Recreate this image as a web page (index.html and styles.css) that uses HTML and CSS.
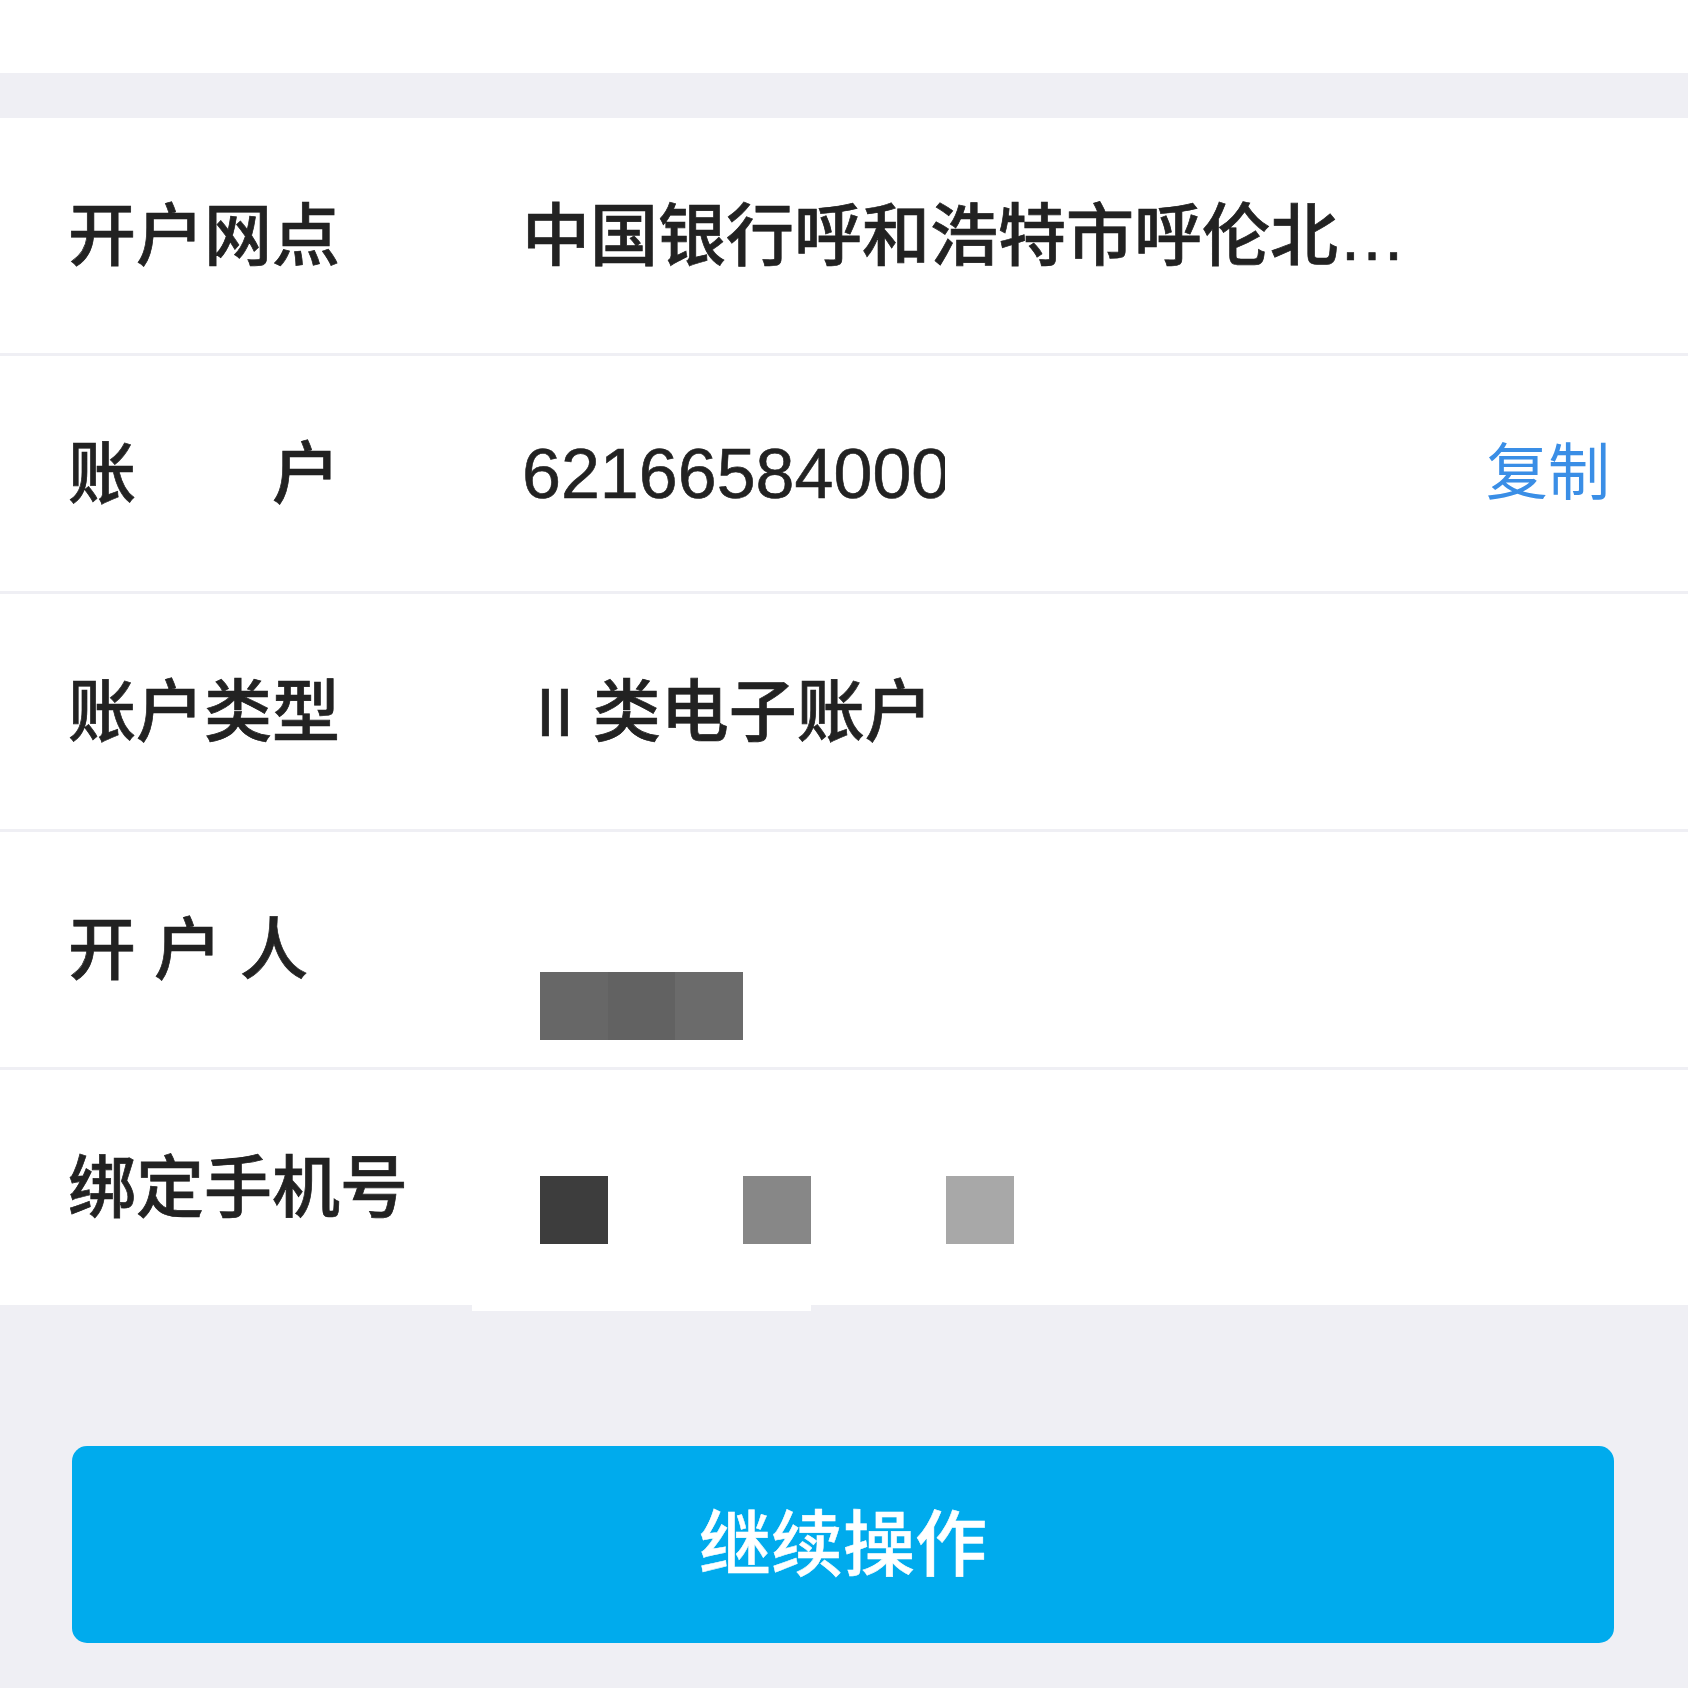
FILE: index.html
```html
<!DOCTYPE html>
<html lang="zh-CN">
<head>
<meta charset="utf-8">
<title>账户信息</title>
<link rel="stylesheet" href="styles.css">
</head>
<body>
<div class="page">
  <div class="topbar"></div>
  <div class="card">
    <div class="row">
      <div class="label">开户网点</div>
      <div class="value">中国银行呼和浩特市呼伦北…</div>
    </div>
    <div class="row">
      <div class="label"><span class="split"><span>账</span><span>户</span></span></div>
      <div class="value clip">62166584000</div>
      <div class="action">复制</div>
    </div>
    <div class="row">
      <div class="label">账户类型</div>
      <div class="value"><span class="roman">II</span> 类电子账户</div>
    </div>
    <div class="row">
      <div class="label spaced">开户人</div>
      <div class="mosaic name">
        <span class="tile t1"></span><span class="tile t2"></span><span class="tile t3"></span>
      </div>
    </div>
    <div class="row">
      <div class="label">绑定手机号</div>
      <div class="mosaic phone">
        <span class="tile p1"></span><span class="tile blank"></span><span class="tile blank"></span>
        <span class="tile p2"></span><span class="tile blank"></span><span class="tile blank"></span>
        <span class="tile p3"></span>
      </div>
    </div>
  </div>
  <div class="tail"></div>
  <div class="footer">
    <button class="primary" type="button">继续操作</button>
  </div>
</div>
</body>
</html>
```
FILE: styles.css
```css
* {
  box-sizing: border-box;
  margin: 0;
  padding: 0;
}

html, body {
  background: #efeff4;
}

body {
  width: 1688px;
  height: 1688px;
  overflow: hidden;
  font-family: "Liberation Sans", "Noto Sans CJK SC", sans-serif;
  color: #222222;
}

.topbar {
  height: 73px;
  background: #ffffff;
}

.card {
  margin-top: 45px;
  background: #ffffff;
}

.row {
  display: flex;
  align-items: center;
  box-sizing: content-box;
  height: 235px;
  padding-left: 68px;
  border-top: 3px solid #efeff4;
}

.row:first-child {
  border-top: 0;
}

.label {
  flex: none;
  width: 454px;
  font-size: 68px;
  line-height: 1;
  font-weight: 500;
  white-space: nowrap;
  -webkit-text-stroke: 0.7px #222222;
}

.split {
  display: flex;
  justify-content: space-between;
  width: 4em;
}

.spaced {
  letter-spacing: 18px;
}

.value {
  font-size: 68px;
  line-height: 1;
  font-weight: 500;
  white-space: nowrap;
  -webkit-text-stroke: 0.7px #222222;
}

.clip {
  width: 423px;
  overflow: hidden;
  font-size: 70px;
  font-weight: 400;
  -webkit-text-stroke: 0.6px #222222;
}

.roman {
  margin-left: 14px;
  font-weight: 400;
}

.action {
  margin-left: auto;
  margin-right: 78px;
  color: #3a8ee6;
  font-size: 62px;
  line-height: 1;
  font-weight: 400;
}

.mosaic {
  align-self: flex-start;
  display: flex;
  margin-left: 18px;
}

.name {
  margin-top: 140px;
}

.phone {
  margin-top: 106px;
}

.tile {
  display: block;
  width: 67.7px;
  height: 67.7px;
}

.t1 { background: #676767; }
.t2 { background: #626262; }
.t3 { background: #6b6b6b; }
.p1 { background: #3d3d3d; }
.p2 { background: #878787; }
.p3 { background: #a8a8a8; }
.blank { background: #ffffff; }

.tail {
  width: 339px;
  height: 6px;
  margin-left: 472px;
  background: #ffffff;
}

.footer {
  padding: 135px 74px 0 72px;
}

.primary {
  display: block;
  width: 100%;
  height: 197px;
  border: 0;
  border-radius: 15px;
  background: #00abed;
  color: #ffffff;
  font-family: "Liberation Sans", "Noto Sans CJK SC", sans-serif;
  font-size: 72px;
  font-weight: 500;
  line-height: 1;
  -webkit-text-stroke: 0.5px #ffffff;
}
```
